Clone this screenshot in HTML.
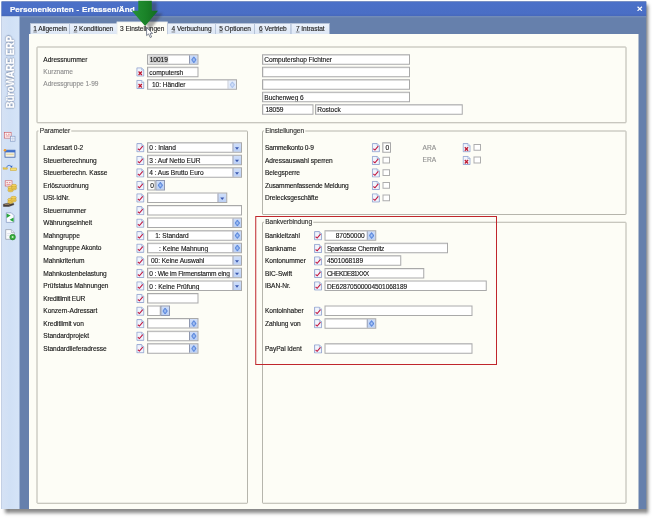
<!DOCTYPE html><html><head><meta charset="utf-8"><style>
*{margin:0;padding:0;box-sizing:border-box}
html,body{width:655px;height:518px;overflow:hidden;background:#fff}
#sc{position:absolute;left:0;top:0;width:2620px;height:2072px;transform:scale(.25);transform-origin:0 0}
#zm{position:absolute;left:0;top:0;width:655px;height:518px;zoom:4;background:#fff}
body{position:relative;font-family:"Liberation Sans",sans-serif;font-size:6.6px;color:#141414;line-height:1;letter-spacing:-.06px;-webkit-text-stroke:.12px currentColor}
.a{position:absolute}
.win{left:1.6px;top:1.5px;width:644.7px;height:507.5px;background:#6680ac;box-shadow:3px 3.5px 3.4px rgba(45,45,45,.6)}
.tb{left:0;top:0;width:100%;height:14.7px;background:linear-gradient(#4b70c8,#4a6ec5 80%,#4668bb);border-top:.6px solid #3f61b4}
.tt{left:8.3px;top:3.2px;font-weight:bold;font-size:8.1px;color:#fff;white-space:nowrap;letter-spacing:.03px;word-spacing:.5px;-webkit-text-stroke:.2px #fff}
.sb{left:0;top:14.7px;width:17.8px;bottom:0;background:linear-gradient(90deg,#d6e2f4,#d0e0f5 45%,#d5e4f7)}
.ct{left:27.4px;top:32.4px;width:609.4px;bottom:0;background:#fdfdf6}
.tab{top:22px;height:10.8px;background:linear-gradient(#ecf2fb,#dde7f5);border:.6px solid #bcc8db;border-bottom:none;white-space:nowrap;padding-top:2.2px;text-align:center;color:#222}
.tab u{text-decoration:underline;text-decoration-thickness:.6px;text-underline-offset:.6px}
.tab.on{top:19.2px;height:12.8px;background:#fdfdf6;border-color:#d8dde6;padding-top:3.2px}
.gb{border:1px solid #b6b5ac;border-radius:1px}
.gl{background:#fdfdf6;padding:0 1.2px;white-space:nowrap;color:#2e2e2e}
.l{white-space:nowrap;color:#141414}
.l.g{color:#8f8f8f}
.f{background:#fff;border:1px solid #a9a9a9;height:10.5px;white-space:nowrap;overflow:hidden;color:#141414;padding-top:1.5px;box-shadow:inset .5px .5px 0 #dadada}
.dd{top:-1px;right:-1px;width:9.6px;height:calc(100% + 2px);background:linear-gradient(#d0dffa,#bcd0f5);border:1px solid #8f98b0}
.dd:after{content:"";position:absolute;left:1.7px;top:3.9px;border:2.1px solid transparent;border-top:2.5px solid #3a58b0;border-bottom:none}
.sp{top:-1px;right:-1px;width:9.5px;height:calc(100% + 2px);background:linear-gradient(#cfdef9,#bbd0f5);border:1px solid #8f98b0}
.sp svg{position:absolute;left:1.2px;top:1.1px}
.sp.dis{opacity:.5}
.cb{width:7.6px;height:6.8px;border:1px solid #adadad;background:#fff}
.red{border:1.1px solid #c0262c}
</style></head><body><div id="sc"><div id="zm"><div class="a win">
<div class="a tb"></div>
<div class="a tt">Personenkonten - Erfassen/Änd</div>
<div class="a" style="left:17.8px;right:0;top:14.7px;height:1px;background:#7b92ba"></div>
<div class="a sb"></div>
<div class="a ct"></div>
</div>
<svg class="a" style="left:636.8px;top:5.9px" width="6" height="5.6" viewBox="0 0 6 5.600"><path d="M.8 .7 L5.200 4.900 M5.200 .7 L.8 4.900" stroke="#fff" stroke-width="1.25" fill="none"/></svg>
<div class="a" style="left:5.2px;top:108.2px;transform-origin:0 0;transform:rotate(-90deg) scale(1,1.08);font-weight:bold;font-size:9.3px;letter-spacing:.1px;-webkit-text-stroke:.45px #fff;color:#fff;white-space:nowrap;text-shadow:0 0 1.2px #5a6e94,0 0 1.3px #5a6e94,.3px .3px 1.4px #5a6e94">BüroWARE ERP</div>
<div class="a tab" style="left:30px;width:40.1px;top:23.1px"><u>1</u> Allgemein</div>
<div class="a tab" style="left:69.5px;width:47.9px;top:23.1px"><u>2</u> Konditionen</div>
<div class="a tab on" style="left:116.8px;width:50.7px;top:21.8px">3 Einstellungen</div>
<div class="a tab" style="left:167.5px;width:48.1px;top:23.1px"><u>4</u> Verbuchung</div>
<div class="a tab" style="left:215px;width:40.1px;top:23.1px"><u>5</u> Optionen</div>
<div class="a tab" style="left:254.5px;width:36.8px;top:23.1px"><u>6</u> Vertrieb</div>
<div class="a tab" style="left:290.7px;width:39.1px;top:23.1px"><u>7</u> Intrastat</div>
<div class="a gb" style="left:36.6px;top:46.6px;width:589.8px;height:76.6px"></div>
<div class="a gb" style="left:36.6px;top:130.4px;width:211.4px;height:373.4px"></div>
<div class="a gl" style="left:38.6px;top:127.3px">Parameter</div>
<div class="a gb" style="left:262px;top:130.4px;width:364.4px;height:84.6px"></div>
<div class="a gl" style="left:264px;top:127.3px">Einstellungen</div>
<div class="a gb" style="left:262px;top:221.8px;width:364.4px;height:282.0px"></div>
<div class="a gl" style="left:264px;top:218.7px">Bankverbindung</div>
<div class="a l " style="left:43.3px;top:56.45px">Adressnummer</div>
<div class="a l g" style="left:43.3px;top:68.55px">Kurzname</div>
<div class="a l g" style="left:43.3px;top:80.75px">Adressgruppe 1-99</div>
<div class="a f" style="left:147px;top:54.30px;width:51.6px;height:10.5px;padding-left:1.3px;"><span style="background:#d4d4d4;padding:.6px .4px">10019</span><div class="a sp"><svg width="5.2" height="6.6" viewBox="0 0 5.200 6.600"><defs><radialGradient id="sg"><stop offset="0" stop-color="#b4cdf5"/><stop offset=".35" stop-color="#8fb0ec"/><stop offset=".75" stop-color="#4f7fd9"/><stop offset="1" stop-color="#4373d0"/></radialGradient></defs><path d="M2.600 .100 L5.100 3.300 L2.600 6.500 L.100 3.300 Z" fill="url(#sg)" stroke="#5c88dc" stroke-width=".5" stroke-linejoin="round"/></svg></div></div>
<svg class="a" style="left:136.2px;top:67.30px" width="8.2" height="9.4" viewBox="0 0 8.2 9.4"><path d="M.6 .6 H5.4 L7.6 2.8 V8.8 H.6 Z" fill="#f1f5fd" stroke="#8d9fce" stroke-width=".9"/><path d="M5.4 .6 V2.8 H7.6" fill="#dfe8f7" stroke="#8fa6cf" stroke-width=".6"/><path d="M2.3 4.3 L5.6 7.7 M5.6 4.3 L2.3 7.7" fill="none" stroke="#bf1a30" stroke-width="1.25"/></svg>
<div class="a f" style="left:147px;top:66.80px;width:51.6px;height:10.5px;padding-left:1.3px;">computersh</div>
<svg class="a" style="left:136.2px;top:79.80px" width="8.2" height="9.4" viewBox="0 0 8.2 9.4"><path d="M.6 .6 H5.4 L7.6 2.8 V8.8 H.6 Z" fill="#f1f5fd" stroke="#8d9fce" stroke-width=".9"/><path d="M5.4 .6 V2.8 H7.6" fill="#dfe8f7" stroke="#8fa6cf" stroke-width=".6"/><path d="M2.3 4.3 L5.6 7.7 M5.6 4.3 L2.3 7.7" fill="none" stroke="#bf1a30" stroke-width="1.25"/></svg>
<div class="a f" style="left:147px;top:79.30px;width:90px;height:10.5px;padding-left:4px;">10: Händler<div class="a sp dis"><svg width="5.2" height="6.6" viewBox="0 0 5.200 6.600"><defs><radialGradient id="sg"><stop offset="0" stop-color="#b4cdf5"/><stop offset=".35" stop-color="#8fb0ec"/><stop offset=".75" stop-color="#4f7fd9"/><stop offset="1" stop-color="#4373d0"/></radialGradient></defs><path d="M2.600 .100 L5.100 3.300 L2.600 6.500 L.100 3.300 Z" fill="url(#sg)" stroke="#5c88dc" stroke-width=".5" stroke-linejoin="round"/></svg></div></div>
<div class="a f" style="left:262px;top:54.30px;width:148px;height:10.5px;padding-left:1.3px;">Computershop Fichtner</div>
<div class="a f" style="left:262px;top:66.80px;width:148px;height:10.5px;padding-left:1.3px;"></div>
<div class="a f" style="left:262px;top:79.30px;width:148px;height:10.5px;padding-left:1.3px;"></div>
<div class="a f" style="left:262px;top:91.80px;width:148px;height:10.5px;padding-left:1.3px;">Buchenweg 6</div>
<div class="a f" style="left:262px;top:104.30px;width:51.6px;height:10.5px;padding-left:2.4px;">18059</div>
<div class="a f" style="left:315px;top:104.30px;width:147.8px;height:10.5px;padding-left:1.3px;">Rostock</div>
<div class="a l " style="left:43.3px;top:144.35px">Landesart 0-2</div>
<svg class="a" style="left:136.2px;top:143.10px" width="8.2" height="9.4" viewBox="0 0 8.2 9.4"><path d="M.6 .6 H5.4 L7.6 2.8 V8.8 H.6 Z" fill="#f1f5fd" stroke="#8d9fce" stroke-width=".9"/><path d="M5.4 .6 V2.8 H7.6" fill="#dfe8f7" stroke="#8fa6cf" stroke-width=".6"/><path d="M1.6 5.8 L3.2 7.1 L6.5 3.1" fill="none" stroke="#c21a40" stroke-width="1.1"/></svg>
<div class="a f" style="left:147px;top:142.25px;width:95px;height:10.5px;padding-left:1.3px;">0 : Inland<div class="a dd"></div></div>
<div class="a l " style="left:43.3px;top:156.91px">Steuerberechnung</div>
<svg class="a" style="left:136.2px;top:155.66px" width="8.2" height="9.4" viewBox="0 0 8.2 9.4"><path d="M.6 .6 H5.4 L7.6 2.8 V8.8 H.6 Z" fill="#f1f5fd" stroke="#8d9fce" stroke-width=".9"/><path d="M5.4 .6 V2.8 H7.6" fill="#dfe8f7" stroke="#8fa6cf" stroke-width=".6"/><path d="M1.6 5.8 L3.2 7.1 L6.5 3.1" fill="none" stroke="#c21a40" stroke-width="1.1"/></svg>
<div class="a f" style="left:147px;top:154.81px;width:95px;height:10.5px;padding-left:1.3px;">3 : Auf Netto EUR<div class="a dd"></div></div>
<div class="a l " style="left:43.3px;top:169.47px">Steuerberechn. Kasse</div>
<svg class="a" style="left:136.2px;top:168.22px" width="8.2" height="9.4" viewBox="0 0 8.2 9.4"><path d="M.6 .6 H5.4 L7.6 2.8 V8.8 H.6 Z" fill="#f1f5fd" stroke="#8d9fce" stroke-width=".9"/><path d="M5.4 .6 V2.8 H7.6" fill="#dfe8f7" stroke="#8fa6cf" stroke-width=".6"/><path d="M1.6 5.8 L3.2 7.1 L6.5 3.1" fill="none" stroke="#c21a40" stroke-width="1.1"/></svg>
<div class="a f" style="left:147px;top:167.37px;width:95px;height:10.5px;padding-left:1.3px;">4 : Aus Brutto Euro<div class="a dd"></div></div>
<div class="a l " style="left:43.3px;top:182.03px">Erlöszuordnung</div>
<svg class="a" style="left:136.2px;top:180.78px" width="8.2" height="9.4" viewBox="0 0 8.2 9.4"><path d="M.6 .6 H5.4 L7.6 2.8 V8.8 H.6 Z" fill="#f1f5fd" stroke="#8d9fce" stroke-width=".9"/><path d="M5.4 .6 V2.8 H7.6" fill="#dfe8f7" stroke="#8fa6cf" stroke-width=".6"/><path d="M1.6 5.8 L3.2 7.1 L6.5 3.1" fill="none" stroke="#c21a40" stroke-width="1.1"/></svg>
<div class="a f" style="left:147px;top:179.93px;width:8.6px;height:10.5px;padding-left:2.2px;">0</div>
<div class="a" style="left:164px;top:180.93px;width:0;height:8.5px"><div class="a sp"><svg width="5.2" height="6.6" viewBox="0 0 5.200 6.600"><defs><radialGradient id="sg"><stop offset="0" stop-color="#b4cdf5"/><stop offset=".35" stop-color="#8fb0ec"/><stop offset=".75" stop-color="#4f7fd9"/><stop offset="1" stop-color="#4373d0"/></radialGradient></defs><path d="M2.600 .100 L5.100 3.300 L2.600 6.500 L.100 3.300 Z" fill="url(#sg)" stroke="#5c88dc" stroke-width=".5" stroke-linejoin="round"/></svg></div></div>
<div class="a l " style="left:43.3px;top:194.59px">USt-IdNr.</div>
<svg class="a" style="left:136.2px;top:193.34px" width="8.2" height="9.4" viewBox="0 0 8.2 9.4"><path d="M.6 .6 H5.4 L7.6 2.8 V8.8 H.6 Z" fill="#f1f5fd" stroke="#8d9fce" stroke-width=".9"/><path d="M5.4 .6 V2.8 H7.6" fill="#dfe8f7" stroke="#8fa6cf" stroke-width=".6"/><path d="M1.6 5.8 L3.2 7.1 L6.5 3.1" fill="none" stroke="#c21a40" stroke-width="1.1"/></svg>
<div class="a f" style="left:147px;top:192.49px;width:80.2px;height:10.5px;padding-left:1.3px;"><div class="a dd"></div></div>
<div class="a l " style="left:43.3px;top:207.15px">Steuernummer</div>
<svg class="a" style="left:136.2px;top:205.90px" width="8.2" height="9.4" viewBox="0 0 8.2 9.4"><path d="M.6 .6 H5.4 L7.6 2.8 V8.8 H.6 Z" fill="#f1f5fd" stroke="#8d9fce" stroke-width=".9"/><path d="M5.4 .6 V2.8 H7.6" fill="#dfe8f7" stroke="#8fa6cf" stroke-width=".6"/><path d="M1.6 5.8 L3.2 7.1 L6.5 3.1" fill="none" stroke="#c21a40" stroke-width="1.1"/></svg>
<div class="a f" style="left:147px;top:205.05px;width:95px;height:10.5px;padding-left:1.3px;"></div>
<div class="a l " style="left:43.3px;top:219.71px">Währungseinheit</div>
<svg class="a" style="left:136.2px;top:218.46px" width="8.2" height="9.4" viewBox="0 0 8.2 9.4"><path d="M.6 .6 H5.4 L7.6 2.8 V8.8 H.6 Z" fill="#f1f5fd" stroke="#8d9fce" stroke-width=".9"/><path d="M5.4 .6 V2.8 H7.6" fill="#dfe8f7" stroke="#8fa6cf" stroke-width=".6"/><path d="M1.6 5.8 L3.2 7.1 L6.5 3.1" fill="none" stroke="#c21a40" stroke-width="1.1"/></svg>
<div class="a f" style="left:147px;top:217.61px;width:95px;height:10.5px;padding-left:1.3px;"><div class="a sp"><svg width="5.2" height="6.6" viewBox="0 0 5.200 6.600"><defs><radialGradient id="sg"><stop offset="0" stop-color="#b4cdf5"/><stop offset=".35" stop-color="#8fb0ec"/><stop offset=".75" stop-color="#4f7fd9"/><stop offset="1" stop-color="#4373d0"/></radialGradient></defs><path d="M2.600 .100 L5.100 3.300 L2.600 6.500 L.100 3.300 Z" fill="url(#sg)" stroke="#5c88dc" stroke-width=".5" stroke-linejoin="round"/></svg></div></div>
<div class="a l " style="left:43.3px;top:232.27px">Mahngruppe</div>
<svg class="a" style="left:136.2px;top:231.02px" width="8.2" height="9.4" viewBox="0 0 8.2 9.4"><path d="M.6 .6 H5.4 L7.6 2.8 V8.8 H.6 Z" fill="#f1f5fd" stroke="#8d9fce" stroke-width=".9"/><path d="M5.4 .6 V2.8 H7.6" fill="#dfe8f7" stroke="#8fa6cf" stroke-width=".6"/><path d="M1.6 5.8 L3.2 7.1 L6.5 3.1" fill="none" stroke="#c21a40" stroke-width="1.1"/></svg>
<div class="a f" style="left:147px;top:230.17px;width:95px;height:10.5px;padding-left:7.2px;">1: Standard<div class="a sp"><svg width="5.2" height="6.6" viewBox="0 0 5.200 6.600"><defs><radialGradient id="sg"><stop offset="0" stop-color="#b4cdf5"/><stop offset=".35" stop-color="#8fb0ec"/><stop offset=".75" stop-color="#4f7fd9"/><stop offset="1" stop-color="#4373d0"/></radialGradient></defs><path d="M2.600 .100 L5.100 3.300 L2.600 6.500 L.100 3.300 Z" fill="url(#sg)" stroke="#5c88dc" stroke-width=".5" stroke-linejoin="round"/></svg></div></div>
<div class="a l " style="left:43.3px;top:244.83px">Mahngruppe Akonto</div>
<svg class="a" style="left:136.2px;top:243.58px" width="8.2" height="9.4" viewBox="0 0 8.2 9.4"><path d="M.6 .6 H5.4 L7.6 2.8 V8.8 H.6 Z" fill="#f1f5fd" stroke="#8d9fce" stroke-width=".9"/><path d="M5.4 .6 V2.8 H7.6" fill="#dfe8f7" stroke="#8fa6cf" stroke-width=".6"/><path d="M1.6 5.8 L3.2 7.1 L6.5 3.1" fill="none" stroke="#c21a40" stroke-width="1.1"/></svg>
<div class="a f" style="left:147px;top:242.73px;width:95px;height:10.5px;padding-left:11px;">: Keine Mahnung<div class="a sp"><svg width="5.2" height="6.6" viewBox="0 0 5.200 6.600"><defs><radialGradient id="sg"><stop offset="0" stop-color="#b4cdf5"/><stop offset=".35" stop-color="#8fb0ec"/><stop offset=".75" stop-color="#4f7fd9"/><stop offset="1" stop-color="#4373d0"/></radialGradient></defs><path d="M2.600 .100 L5.100 3.300 L2.600 6.500 L.100 3.300 Z" fill="url(#sg)" stroke="#5c88dc" stroke-width=".5" stroke-linejoin="round"/></svg></div></div>
<div class="a l " style="left:43.3px;top:257.39px">Mahnkriterium</div>
<svg class="a" style="left:136.2px;top:256.14px" width="8.2" height="9.4" viewBox="0 0 8.2 9.4"><path d="M.6 .6 H5.4 L7.6 2.8 V8.8 H.6 Z" fill="#f1f5fd" stroke="#8d9fce" stroke-width=".9"/><path d="M5.4 .6 V2.8 H7.6" fill="#dfe8f7" stroke="#8fa6cf" stroke-width=".6"/><path d="M1.6 5.8 L3.2 7.1 L6.5 3.1" fill="none" stroke="#c21a40" stroke-width="1.1"/></svg>
<div class="a f" style="left:147px;top:255.29px;width:95px;height:10.5px;padding-left:3px;">00: Keine Auswahl<div class="a dd"></div></div>
<div class="a l " style="left:43.3px;top:269.95px">Mahnkostenbelastung</div>
<svg class="a" style="left:136.2px;top:268.70px" width="8.2" height="9.4" viewBox="0 0 8.2 9.4"><path d="M.6 .6 H5.4 L7.6 2.8 V8.8 H.6 Z" fill="#f1f5fd" stroke="#8d9fce" stroke-width=".9"/><path d="M5.4 .6 V2.8 H7.6" fill="#dfe8f7" stroke="#8fa6cf" stroke-width=".6"/><path d="M1.6 5.8 L3.2 7.1 L6.5 3.1" fill="none" stroke="#c21a40" stroke-width="1.1"/></svg>
<div class="a f" style="left:147px;top:267.85px;width:95px;height:10.5px;padding-left:1.3px;"><span style="letter-spacing:-.2px">0 : Wie im Firmenstamm eing</span><div class="a dd"></div></div>
<div class="a l " style="left:43.3px;top:282.51px">Prüfstatus Mahnungen</div>
<svg class="a" style="left:136.2px;top:281.26px" width="8.2" height="9.4" viewBox="0 0 8.2 9.4"><path d="M.6 .6 H5.4 L7.6 2.8 V8.8 H.6 Z" fill="#f1f5fd" stroke="#8d9fce" stroke-width=".9"/><path d="M5.4 .6 V2.8 H7.6" fill="#dfe8f7" stroke="#8fa6cf" stroke-width=".6"/><path d="M1.6 5.8 L3.2 7.1 L6.5 3.1" fill="none" stroke="#c21a40" stroke-width="1.1"/></svg>
<div class="a f" style="left:147px;top:280.41px;width:95px;height:10.5px;padding-left:1.3px;">0 : Keine Prüfung<div class="a dd"></div></div>
<div class="a l " style="left:43.3px;top:295.07px"><span style="letter-spacing:-.2px">Kreditlimit EUR</span></div>
<svg class="a" style="left:136.2px;top:293.82px" width="8.2" height="9.4" viewBox="0 0 8.2 9.4"><path d="M.6 .6 H5.4 L7.6 2.8 V8.8 H.6 Z" fill="#f1f5fd" stroke="#8d9fce" stroke-width=".9"/><path d="M5.4 .6 V2.8 H7.6" fill="#dfe8f7" stroke="#8fa6cf" stroke-width=".6"/><path d="M1.6 5.8 L3.2 7.1 L6.5 3.1" fill="none" stroke="#c21a40" stroke-width="1.1"/></svg>
<div class="a f" style="left:147px;top:292.97px;width:51.6px;height:10.5px;padding-left:1.3px;"></div>
<div class="a l " style="left:43.3px;top:307.63px">Konzern-Adressart</div>
<svg class="a" style="left:136.2px;top:306.38px" width="8.2" height="9.4" viewBox="0 0 8.2 9.4"><path d="M.6 .6 H5.4 L7.6 2.8 V8.8 H.6 Z" fill="#f1f5fd" stroke="#8d9fce" stroke-width=".9"/><path d="M5.4 .6 V2.8 H7.6" fill="#dfe8f7" stroke="#8fa6cf" stroke-width=".6"/><path d="M1.6 5.8 L3.2 7.1 L6.5 3.1" fill="none" stroke="#c21a40" stroke-width="1.1"/></svg>
<div class="a f" style="left:147px;top:305.53px;width:13.8px;height:10.5px;padding-left:1.3px;"></div>
<div class="a" style="left:168.9px;top:306.53px;width:0;height:8.5px"><div class="a sp"><svg width="5.2" height="6.6" viewBox="0 0 5.200 6.600"><defs><radialGradient id="sg"><stop offset="0" stop-color="#b4cdf5"/><stop offset=".35" stop-color="#8fb0ec"/><stop offset=".75" stop-color="#4f7fd9"/><stop offset="1" stop-color="#4373d0"/></radialGradient></defs><path d="M2.600 .100 L5.100 3.300 L2.600 6.500 L.100 3.300 Z" fill="url(#sg)" stroke="#5c88dc" stroke-width=".5" stroke-linejoin="round"/></svg></div></div>
<div class="a l " style="left:43.3px;top:320.19px">Kreditlimit von</div>
<svg class="a" style="left:136.2px;top:318.94px" width="8.2" height="9.4" viewBox="0 0 8.2 9.4"><path d="M.6 .6 H5.4 L7.6 2.8 V8.8 H.6 Z" fill="#f1f5fd" stroke="#8d9fce" stroke-width=".9"/><path d="M5.4 .6 V2.8 H7.6" fill="#dfe8f7" stroke="#8fa6cf" stroke-width=".6"/><path d="M1.6 5.8 L3.2 7.1 L6.5 3.1" fill="none" stroke="#c21a40" stroke-width="1.1"/></svg>
<div class="a f" style="left:147px;top:318.09px;width:51.6px;height:10.5px;padding-left:1.3px;"><div class="a sp"><svg width="5.2" height="6.6" viewBox="0 0 5.200 6.600"><defs><radialGradient id="sg"><stop offset="0" stop-color="#b4cdf5"/><stop offset=".35" stop-color="#8fb0ec"/><stop offset=".75" stop-color="#4f7fd9"/><stop offset="1" stop-color="#4373d0"/></radialGradient></defs><path d="M2.600 .100 L5.100 3.300 L2.600 6.500 L.100 3.300 Z" fill="url(#sg)" stroke="#5c88dc" stroke-width=".5" stroke-linejoin="round"/></svg></div></div>
<div class="a l " style="left:43.3px;top:332.75px">Standardprojekt</div>
<svg class="a" style="left:136.2px;top:331.50px" width="8.2" height="9.4" viewBox="0 0 8.2 9.4"><path d="M.6 .6 H5.4 L7.6 2.8 V8.8 H.6 Z" fill="#f1f5fd" stroke="#8d9fce" stroke-width=".9"/><path d="M5.4 .6 V2.8 H7.6" fill="#dfe8f7" stroke="#8fa6cf" stroke-width=".6"/><path d="M1.6 5.8 L3.2 7.1 L6.5 3.1" fill="none" stroke="#c21a40" stroke-width="1.1"/></svg>
<div class="a f" style="left:147px;top:330.65px;width:51.6px;height:10.5px;padding-left:1.3px;"><div class="a sp"><svg width="5.2" height="6.6" viewBox="0 0 5.200 6.600"><defs><radialGradient id="sg"><stop offset="0" stop-color="#b4cdf5"/><stop offset=".35" stop-color="#8fb0ec"/><stop offset=".75" stop-color="#4f7fd9"/><stop offset="1" stop-color="#4373d0"/></radialGradient></defs><path d="M2.600 .100 L5.100 3.300 L2.600 6.500 L.100 3.300 Z" fill="url(#sg)" stroke="#5c88dc" stroke-width=".5" stroke-linejoin="round"/></svg></div></div>
<div class="a l " style="left:43.3px;top:345.31px">Standardlieferadresse</div>
<svg class="a" style="left:136.2px;top:344.06px" width="8.2" height="9.4" viewBox="0 0 8.2 9.4"><path d="M.6 .6 H5.4 L7.6 2.8 V8.8 H.6 Z" fill="#f1f5fd" stroke="#8d9fce" stroke-width=".9"/><path d="M5.4 .6 V2.8 H7.6" fill="#dfe8f7" stroke="#8fa6cf" stroke-width=".6"/><path d="M1.6 5.8 L3.2 7.1 L6.5 3.1" fill="none" stroke="#c21a40" stroke-width="1.1"/></svg>
<div class="a f" style="left:147px;top:343.21px;width:51.6px;height:10.5px;padding-left:1.3px;"><div class="a sp"><svg width="5.2" height="6.6" viewBox="0 0 5.200 6.600"><defs><radialGradient id="sg"><stop offset="0" stop-color="#b4cdf5"/><stop offset=".35" stop-color="#8fb0ec"/><stop offset=".75" stop-color="#4f7fd9"/><stop offset="1" stop-color="#4373d0"/></radialGradient></defs><path d="M2.600 .100 L5.100 3.300 L2.600 6.500 L.100 3.300 Z" fill="url(#sg)" stroke="#5c88dc" stroke-width=".5" stroke-linejoin="round"/></svg></div></div>
<div class="a l " style="left:265px;top:144.35px"><span style="letter-spacing:-.2px">Sammelkonto 0-9</span></div>
<svg class="a" style="left:371.8px;top:143.10px" width="8.2" height="9.4" viewBox="0 0 8.2 9.4"><path d="M.6 .6 H5.4 L7.6 2.8 V8.8 H.6 Z" fill="#f1f5fd" stroke="#8d9fce" stroke-width=".9"/><path d="M5.4 .6 V2.8 H7.6" fill="#dfe8f7" stroke="#8fa6cf" stroke-width=".6"/><path d="M1.6 5.8 L3.2 7.1 L6.5 3.1" fill="none" stroke="#c21a40" stroke-width="1.1"/></svg>
<div class="a f" style="left:382.2px;top:142.25px;width:8.8px;height:10.5px;padding-left:2.4px;">0</div>
<div class="a l " style="left:265px;top:156.91px">Adressauswahl sperren</div>
<svg class="a" style="left:371.8px;top:155.66px" width="8.2" height="9.4" viewBox="0 0 8.2 9.4"><path d="M.6 .6 H5.4 L7.6 2.8 V8.8 H.6 Z" fill="#f1f5fd" stroke="#8d9fce" stroke-width=".9"/><path d="M5.4 .6 V2.8 H7.6" fill="#dfe8f7" stroke="#8fa6cf" stroke-width=".6"/><path d="M1.6 5.8 L3.2 7.1 L6.5 3.1" fill="none" stroke="#c21a40" stroke-width="1.1"/></svg>
<div class="a cb" style="left:382.4px;top:156.76px"></div>
<div class="a l " style="left:265px;top:169.47px">Belegsperre</div>
<svg class="a" style="left:371.8px;top:168.22px" width="8.2" height="9.4" viewBox="0 0 8.2 9.4"><path d="M.6 .6 H5.4 L7.6 2.8 V8.8 H.6 Z" fill="#f1f5fd" stroke="#8d9fce" stroke-width=".9"/><path d="M5.4 .6 V2.8 H7.6" fill="#dfe8f7" stroke="#8fa6cf" stroke-width=".6"/><path d="M1.6 5.8 L3.2 7.1 L6.5 3.1" fill="none" stroke="#c21a40" stroke-width="1.1"/></svg>
<div class="a cb" style="left:382.4px;top:169.32px"></div>
<div class="a l " style="left:265px;top:182.03px"><span style="letter-spacing:-.14px">Zusammenfassende Meldung</span></div>
<svg class="a" style="left:371.8px;top:180.78px" width="8.2" height="9.4" viewBox="0 0 8.2 9.4"><path d="M.6 .6 H5.4 L7.6 2.8 V8.8 H.6 Z" fill="#f1f5fd" stroke="#8d9fce" stroke-width=".9"/><path d="M5.4 .6 V2.8 H7.6" fill="#dfe8f7" stroke="#8fa6cf" stroke-width=".6"/><path d="M1.6 5.8 L3.2 7.1 L6.5 3.1" fill="none" stroke="#c21a40" stroke-width="1.1"/></svg>
<div class="a cb" style="left:382.4px;top:181.88px"></div>
<div class="a l " style="left:265px;top:194.59px">Dreiecksgeschäfte</div>
<svg class="a" style="left:371.8px;top:193.34px" width="8.2" height="9.4" viewBox="0 0 8.2 9.4"><path d="M.6 .6 H5.4 L7.6 2.8 V8.8 H.6 Z" fill="#f1f5fd" stroke="#8d9fce" stroke-width=".9"/><path d="M5.4 .6 V2.8 H7.6" fill="#dfe8f7" stroke="#8fa6cf" stroke-width=".6"/><path d="M1.6 5.8 L3.2 7.1 L6.5 3.1" fill="none" stroke="#c21a40" stroke-width="1.1"/></svg>
<div class="a cb" style="left:382.4px;top:194.44px"></div>
<div class="a l g" style="left:422.6px;top:144.05px">ARA</div>
<svg class="a" style="left:462.6px;top:143.10px" width="8.2" height="9.4" viewBox="0 0 8.2 9.4"><path d="M.6 .6 H5.4 L7.6 2.8 V8.8 H.6 Z" fill="#f1f5fd" stroke="#8d9fce" stroke-width=".9"/><path d="M5.4 .6 V2.8 H7.6" fill="#dfe8f7" stroke="#8fa6cf" stroke-width=".6"/><path d="M2.3 4.3 L5.6 7.7 M5.6 4.3 L2.3 7.7" fill="none" stroke="#bf1a30" stroke-width="1.25"/></svg>
<div class="a cb" style="left:473.4px;top:144.00px"></div>
<div class="a l g" style="left:422.6px;top:156.65px">ERA</div>
<svg class="a" style="left:462.6px;top:155.70px" width="8.2" height="9.4" viewBox="0 0 8.2 9.4"><path d="M.6 .6 H5.4 L7.6 2.8 V8.8 H.6 Z" fill="#f1f5fd" stroke="#8d9fce" stroke-width=".9"/><path d="M5.4 .6 V2.8 H7.6" fill="#dfe8f7" stroke="#8fa6cf" stroke-width=".6"/><path d="M2.3 4.3 L5.6 7.7 M5.6 4.3 L2.3 7.7" fill="none" stroke="#bf1a30" stroke-width="1.25"/></svg>
<div class="a cb" style="left:473.4px;top:156.60px"></div>
<div class="a l " style="left:265px;top:232.35px">Bankleitzahl</div>
<svg class="a" style="left:314.1px;top:231.10px" width="8.2" height="9.4" viewBox="0 0 8.2 9.4"><path d="M.6 .6 H5.4 L7.6 2.8 V8.8 H.6 Z" fill="#f1f5fd" stroke="#8d9fce" stroke-width=".9"/><path d="M5.4 .6 V2.8 H7.6" fill="#dfe8f7" stroke="#8fa6cf" stroke-width=".6"/><path d="M1.6 5.8 L3.2 7.1 L6.5 3.1" fill="none" stroke="#c21a40" stroke-width="1.1"/></svg>
<div class="a f" style="left:324.6px;top:230.25px;width:51.6px;height:10.5px;padding-left:1.3px;"><span style="position:absolute;right:10.6px">87050000</span><div class="a sp"><svg width="5.2" height="6.6" viewBox="0 0 5.200 6.600"><defs><radialGradient id="sg"><stop offset="0" stop-color="#b4cdf5"/><stop offset=".35" stop-color="#8fb0ec"/><stop offset=".75" stop-color="#4f7fd9"/><stop offset="1" stop-color="#4373d0"/></radialGradient></defs><path d="M2.600 .100 L5.100 3.300 L2.600 6.500 L.100 3.300 Z" fill="url(#sg)" stroke="#5c88dc" stroke-width=".5" stroke-linejoin="round"/></svg></div></div>
<div class="a l " style="left:265px;top:244.91px">Bankname</div>
<svg class="a" style="left:314.1px;top:243.66px" width="8.2" height="9.4" viewBox="0 0 8.2 9.4"><path d="M.6 .6 H5.4 L7.6 2.8 V8.8 H.6 Z" fill="#f1f5fd" stroke="#8d9fce" stroke-width=".9"/><path d="M5.4 .6 V2.8 H7.6" fill="#dfe8f7" stroke="#8fa6cf" stroke-width=".6"/><path d="M1.6 5.8 L3.2 7.1 L6.5 3.1" fill="none" stroke="#c21a40" stroke-width="1.1"/></svg>
<div class="a f" style="left:324.6px;top:242.81px;width:123.4px;height:10.5px;padding-left:1.3px;"><span style="letter-spacing:-.2px">Sparkasse Chemnitz</span></div>
<div class="a l " style="left:265px;top:257.47px">Kontonummer</div>
<svg class="a" style="left:314.1px;top:256.22px" width="8.2" height="9.4" viewBox="0 0 8.2 9.4"><path d="M.6 .6 H5.4 L7.6 2.8 V8.8 H.6 Z" fill="#f1f5fd" stroke="#8d9fce" stroke-width=".9"/><path d="M5.4 .6 V2.8 H7.6" fill="#dfe8f7" stroke="#8fa6cf" stroke-width=".6"/><path d="M1.6 5.8 L3.2 7.1 L6.5 3.1" fill="none" stroke="#c21a40" stroke-width="1.1"/></svg>
<div class="a f" style="left:324.6px;top:255.37px;width:76.7px;height:10.5px;padding-left:1.3px;">4501068189</div>
<div class="a l " style="left:265px;top:270.03px">BIC-Swift</div>
<svg class="a" style="left:314.1px;top:268.78px" width="8.2" height="9.4" viewBox="0 0 8.2 9.4"><path d="M.6 .6 H5.4 L7.6 2.8 V8.8 H.6 Z" fill="#f1f5fd" stroke="#8d9fce" stroke-width=".9"/><path d="M5.4 .6 V2.8 H7.6" fill="#dfe8f7" stroke="#8fa6cf" stroke-width=".6"/><path d="M1.6 5.8 L3.2 7.1 L6.5 3.1" fill="none" stroke="#c21a40" stroke-width="1.1"/></svg>
<div class="a f" style="left:324.6px;top:267.93px;width:99.6px;height:10.5px;padding-left:1.3px;"><span style="letter-spacing:-.58px">CHEKDE81XXX</span></div>
<div class="a l " style="left:265px;top:282.59px">IBAN-Nr.</div>
<svg class="a" style="left:314.1px;top:281.34px" width="8.2" height="9.4" viewBox="0 0 8.2 9.4"><path d="M.6 .6 H5.4 L7.6 2.8 V8.8 H.6 Z" fill="#f1f5fd" stroke="#8d9fce" stroke-width=".9"/><path d="M5.4 .6 V2.8 H7.6" fill="#dfe8f7" stroke="#8fa6cf" stroke-width=".6"/><path d="M1.6 5.8 L3.2 7.1 L6.5 3.1" fill="none" stroke="#c21a40" stroke-width="1.1"/></svg>
<div class="a f" style="left:324.6px;top:280.49px;width:162.2px;height:10.5px;padding-left:1.3px;"><span style="letter-spacing:-.11px">DE62870500004501068189</span></div>
<div class="a l " style="left:265px;top:307.71px">Kontoinhaber</div>
<svg class="a" style="left:314.1px;top:306.46px" width="8.2" height="9.4" viewBox="0 0 8.2 9.4"><path d="M.6 .6 H5.4 L7.6 2.8 V8.8 H.6 Z" fill="#f1f5fd" stroke="#8d9fce" stroke-width=".9"/><path d="M5.4 .6 V2.8 H7.6" fill="#dfe8f7" stroke="#8fa6cf" stroke-width=".6"/><path d="M1.6 5.8 L3.2 7.1 L6.5 3.1" fill="none" stroke="#c21a40" stroke-width="1.1"/></svg>
<div class="a f" style="left:324.6px;top:305.61px;width:147.8px;height:10.5px;padding-left:1.3px;"></div>
<div class="a l " style="left:265px;top:320.27px">Zahlung von</div>
<svg class="a" style="left:314.1px;top:319.02px" width="8.2" height="9.4" viewBox="0 0 8.2 9.4"><path d="M.6 .6 H5.4 L7.6 2.8 V8.8 H.6 Z" fill="#f1f5fd" stroke="#8d9fce" stroke-width=".9"/><path d="M5.4 .6 V2.8 H7.6" fill="#dfe8f7" stroke="#8fa6cf" stroke-width=".6"/><path d="M1.6 5.8 L3.2 7.1 L6.5 3.1" fill="none" stroke="#c21a40" stroke-width="1.1"/></svg>
<div class="a f" style="left:324.6px;top:318.17px;width:51.6px;height:10.5px;padding-left:1.3px;"><div class="a sp"><svg width="5.2" height="6.6" viewBox="0 0 5.200 6.600"><defs><radialGradient id="sg"><stop offset="0" stop-color="#b4cdf5"/><stop offset=".35" stop-color="#8fb0ec"/><stop offset=".75" stop-color="#4f7fd9"/><stop offset="1" stop-color="#4373d0"/></radialGradient></defs><path d="M2.600 .100 L5.100 3.300 L2.600 6.500 L.100 3.300 Z" fill="url(#sg)" stroke="#5c88dc" stroke-width=".5" stroke-linejoin="round"/></svg></div></div>
<div class="a l " style="left:265px;top:345.39px">PayPal Ident</div>
<svg class="a" style="left:314.1px;top:344.14px" width="8.2" height="9.4" viewBox="0 0 8.2 9.4"><path d="M.6 .6 H5.4 L7.6 2.8 V8.8 H.6 Z" fill="#f1f5fd" stroke="#8d9fce" stroke-width=".9"/><path d="M5.4 .6 V2.8 H7.6" fill="#dfe8f7" stroke="#8fa6cf" stroke-width=".6"/><path d="M1.6 5.8 L3.2 7.1 L6.5 3.1" fill="none" stroke="#c21a40" stroke-width="1.1"/></svg>
<div class="a f" style="left:324.6px;top:343.29px;width:147.8px;height:10.5px;padding-left:1.3px;"></div>
<div class="a red" style="left:255.2px;top:216px;width:241.8px;height:149px"></div>
<svg class="a" style="left:0;top:125px" width="20" height="120" viewBox="0 125 20 120"><rect x="4.300" y="132.300" width="6.800" height="5.800" fill="#fff" stroke="#c9555c" stroke-width=".65"/><path d="M5.600 134.200h1.600M8 134.200h1.800M5.600 136h4.200" stroke="#d6525a" stroke-width=".7"/><rect x="10.600" y="136.200" width="4.400" height="5" fill="#eef3fb" stroke="#7d93bf" stroke-width=".6"/><path d="M12.800 136.200v5M10.600 138.700h4.400" stroke="#9fb2d8" stroke-width=".4"/><rect x="5" y="150.200" width="10" height="7" fill="#f7f3e6" stroke="#3f63ad" stroke-width=".8"/><rect x="5" y="150.200" width="10" height="2.200" fill="#3f6fcb"/><rect x="6.200" y="153.600" width="7.600" height="1.500" fill="#e6d9a8"/><circle cx="5" cy="150.300" r="1.300" fill="#f09a2e"/><rect x="3" y="167.700" width="4.500" height="1.600" fill="#e8c548" stroke="#c5a233" stroke-width=".3"/><rect x="10.400" y="168" width="6.200" height="2.600" fill="#f3df7a" stroke="#c5a233" stroke-width=".5"/><path d="M6.600 167.400a2.600 2.900 0 0 1 5 0" fill="none" stroke="#4a7ad2" stroke-width=".9"/><path d="M10.300 166.200l1.600 1.600 .6-2.200z" fill="#2f5fc0"/><rect x="5.200" y="180.800" width="6.800" height="5.200" fill="#fff" stroke="#c9555c" stroke-width=".65"/><path d="M6.400 182.600h1.600M8.800 182.600h1.800M6.400 184.300h4.200" stroke="#d6525a" stroke-width=".7"/><ellipse cx="10.6" cy="190.6" rx="2.700" ry="1.300" fill="#f3d25a" stroke="#b8922a" stroke-width=".45"/><ellipse cx="10.6" cy="189.1" rx="2.700" ry="1.300" fill="#f3d25a" stroke="#b8922a" stroke-width=".45"/><ellipse cx="10.6" cy="187.6" rx="2.700" ry="1.300" fill="#f3d25a" stroke="#b8922a" stroke-width=".45"/><ellipse cx="14" cy="188.6" rx="2.700" ry="1.300" fill="#f3d25a" stroke="#b8922a" stroke-width=".45"/><ellipse cx="14" cy="187.1" rx="2.700" ry="1.300" fill="#f3d25a" stroke="#b8922a" stroke-width=".45"/><ellipse cx="14" cy="185.6" rx="2.700" ry="1.300" fill="#f3d25a" stroke="#b8922a" stroke-width=".45"/><ellipse cx="10.4" cy="202.6" rx="2.700" ry="1.300" fill="#f3d25a" stroke="#b8922a" stroke-width=".45"/><ellipse cx="10.4" cy="201.1" rx="2.700" ry="1.300" fill="#f3d25a" stroke="#b8922a" stroke-width=".45"/><ellipse cx="10.4" cy="199.6" rx="2.700" ry="1.300" fill="#f3d25a" stroke="#b8922a" stroke-width=".45"/><ellipse cx="13.6" cy="200.6" rx="2.700" ry="1.300" fill="#f3d25a" stroke="#b8922a" stroke-width=".45"/><ellipse cx="13.6" cy="199.1" rx="2.700" ry="1.300" fill="#f3d25a" stroke="#b8922a" stroke-width=".45"/><ellipse cx="13.6" cy="197.6" rx="2.700" ry="1.300" fill="#f3d25a" stroke="#b8922a" stroke-width=".45"/><path d="M3.400 204.200c2.500-1 5-.9 7 0l3-.600c.8 0 .9.800.2 1.200l-4.600 1.600H3.400z" fill="#4a3f3a" stroke="#2c2622" stroke-width=".4"/><path d="M4.600 204.600c1.600-.500 3.400-.400 5 .300" stroke="#c9a77a" stroke-width=".7" fill="none"/><path d="M6.300 212.800h5l2.700 2.700v6.900h-7.700z" fill="#fafcff" stroke="#8094c0" stroke-width=".7"/><path d="M6.600 213.400l4 2.200-4 2.300z" fill="#27a63a"/><path d="M13.600 217.600l-4 2.200 4 2.300z" fill="#27a63a"/><path d="M5.700 229.600h5.600l2.900 2.900v6.800h-8.500z" fill="#fbfcfe" stroke="#8e96a8" stroke-width=".7"/><path d="M11.300 229.600v2.900h2.900" fill="#e4e9f2" stroke="#8e96a8" stroke-width=".5"/><path d="M7.200 233.500h4M7.200 235.300h2.500" stroke="#c6cede" stroke-width=".5"/><circle cx="12.600" cy="237.100" r="2.800" fill="#36ad3c" stroke="#1d7f25" stroke-width=".6"/><circle cx="12.600" cy="237.100" r="1" fill="#c9f0c4"/></svg>
<svg class="a" style="left:126px;top:0" width="40" height="30" viewBox="0 0 40 30"><defs><linearGradient id="g" x1="0" x2="1"><stop offset="0" stop-color="#259236"/><stop offset=".5" stop-color="#1b8429"/><stop offset="1" stop-color="#126c1e"/></linearGradient><filter id="bl"><feGaussianBlur stdDeviation="1"/></filter></defs><path d="M14.500 1 H28.500 V11.700 H34.700 L22 28.200 L8.500 11.700 H14.500 Z" fill="#333" opacity=".4" filter="url(#bl)" transform="translate(2.200,1.600)"/><path d="M12.300 .8 H25.800 V10.700 H32 L19.100 26 L5.800 10.700 H12.300 Z" fill="url(#g)"/></svg>
<svg class="a" style="left:146.1px;top:27px" width="9" height="12" viewBox="0 0 9 12"><path d="M.6 .6 V8.600 L2.600 6.900 L4.200 10.500 L5.600 9.900 L4.100 6.400 H6.600 Z" fill="#fff" stroke="#2e3850" stroke-width=".6"/></svg></div></div></body></html>
